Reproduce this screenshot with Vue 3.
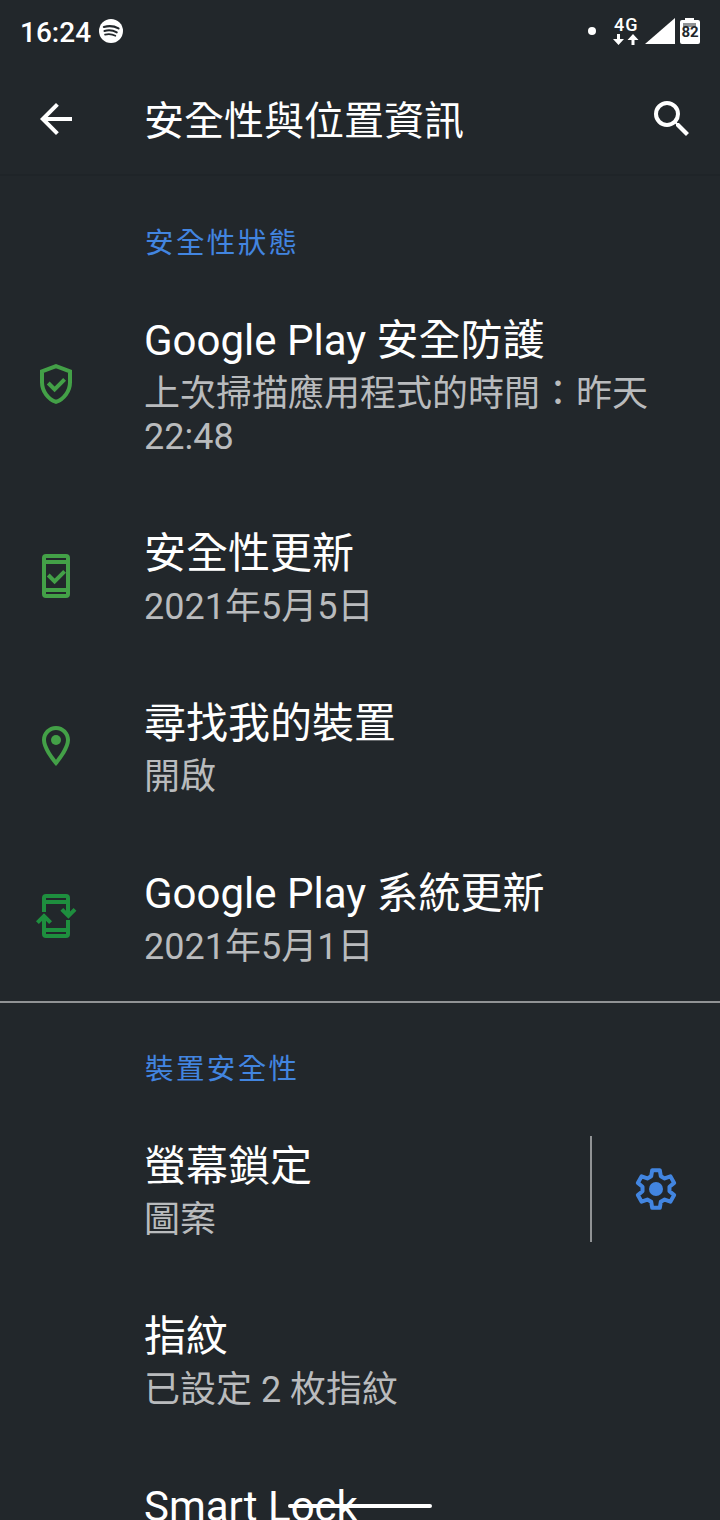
<script setup>
const status = [
  { icon: 'shield', title: 'Google Play 安全防護', summary: '上次掃描應用程式的時間：昨天 22:48' },
  { icon: 'update', title: '安全性更新', summary: '2021年5月5日' },
  { icon: 'pin', title: '尋找我的裝置', summary: '開啟' },
  { icon: 'system', title: 'Google Play 系統更新', summary: '2021年5月1日' },
]
const device = [
  { title: '螢幕鎖定', summary: '圖案', settings: true },
  { title: '指紋', summary: '已設定 2 枚指紋' },
  { title: 'Smart Lock', summary: '' },
]
</script>

<template>
  <div class="screen">
    <header class="status-bar">
      <span class="clock">16:24</span>
      <svg class="spotify" viewBox="0 0 24 24">
        <circle cx="12" cy="12" r="12" fill="#fff" />
        <g fill="none" stroke="#22272b" stroke-linecap="round">
          <path d="M4.900 8c5-1.400 10.400-.9 14.600 1.400" stroke-width="2.200" />
          <path d="M5.400 12c4.300-1.200 8.700-.7 12.400 1.400" stroke-width="1.900" />
          <path d="M6 15.600c3.700-.9 7.300-.5 10.400 1.200" stroke-width="1.600" />
        </g>
      </svg>
      <span class="spacer"></span>
      <span class="dot"></span>
      <div class="network">
        <span class="gen">4G</span>
        <svg class="arrows" viewBox="0 0 26 11" fill="#fff">
          <path d="M4 0h3v5h4L5.500 11 0 5h4zM18.500 11h3V6h4L20 0l-5.500 6h4z" />
        </svg>
      </div>
      <svg class="signal" viewBox="0 0 30 26"><path d="M30 0v26H0z" fill="#fff" /></svg>
      <div class="battery">
        <svg viewBox="0 0 20 26">
          <path d="M5 0h9v2h4a2 2 0 0 1 2 2v20a2 2 0 0 1-2 2H2a2 2 0 0 1-2-2V4a2 2 0 0 1 2-2h3z" fill="#fff" />
          <path d="M3 5h13v4H3z" fill="#909395" />
        </svg>
        <span class="level">82</span>
      </div>
    </header>

    <div class="app-bar">
      <svg class="back" viewBox="0 0 24 24"><path d="M20 11H7.830l5.590-5.590L12 4l-8 8 8 8 1.410-1.410L7.830 13H20z" fill="#fff" /></svg>
      <h1>安全性與位置資訊</h1>
      <svg class="search" viewBox="0 0 24 24"><path d="M15.500 14h-.79l-.28-.27A6.470 6.470 0 0 0 16 9.500 6.500 6.500 0 1 0 9.500 16c1.610 0 3.090-.59 4.230-1.570l.27.28v.79l5 4.990L20.490 19zM9.500 14a4.500 4.500 0 1 1 0-9 4.500 4.500 0 0 1 0 9z" fill="#fff" /></svg>
    </div>

    <section class="group first">
      <h2>安全性狀態</h2>
      <div v-for="item in status" :key="item.title" class="row">
        <div class="icon" :class="item.icon">
          <svg v-if="item.icon === 'shield'" viewBox="0 0 24 24" fill="none" stroke="#43a047" stroke-width="2">
            <path d="M12 3.100 5 5.750v5.340c0 4.400 3 8.500 7 9.850 4-1.350 7-5.450 7-9.850V5.750z" />
            <path d="m8.100 11.500 3.200 3.200 5-5" />
          </svg>
          <svg v-else-if="item.icon === 'update'" viewBox="0 0 24 24" fill="none" stroke="#43a047" stroke-width="2">
            <rect x="6" y="2" width="12" height="20" rx="1" />
            <path d="M6 5h12M6 19h12M8.100 11.500l3.200 3.200 5-5" />
          </svg>
          <svg v-else-if="item.icon === 'pin'" viewBox="0 0 24 24" fill="#43a047">
            <path d="M12 2C8.130 2 5 5.130 5 9c0 5.250 7 13 7 13s7-7.750 7-13c0-3.870-3.130-7-7-7zM7 9c0-2.760 2.240-5 5-5s5 2.240 5 5c0 2.880-2.880 7.190-5 9.880C9.920 16.210 7 11.850 7 9z" />
            <circle cx="12" cy="9" r="2.500" />
          </svg>
          <svg v-else viewBox="0 0 24 24" fill="none" stroke="#1e8e3e" stroke-width="2">
            <path d="M6 10V3a1 1 0 0 1 1-1h10a1 1 0 0 1 1 1v9M6 5h12M18 14v7a1 1 0 0 1-1 1H7a1 1 0 0 1-1-1v-9M6 19h12" />
            <path d="m14.900 8.700 3.300 3.300 3.300-3.300M2.700 15.300 6 12l3.300 3.300" />
          </svg>
        </div>
        <div class="text">
          <div class="title">{{ item.title }}</div>
          <div class="summary">{{ item.summary }}</div>
        </div>
      </div>
    </section>

    <section class="group second">
      <h2>裝置安全性</h2>
      <div v-for="item in device" :key="item.title" class="row">
        <div class="icon"></div>
        <div class="text">
          <div class="title">{{ item.title }}</div>
          <div class="summary">{{ item.summary }}</div>
        </div>
        <div v-if="item.settings" class="action">
          <svg viewBox="0 0 24 24">
            <path d="M9.600 5.600 10.100 2.600H13.900L14.400 5.600 16.340 6.720 19.190 5.650 21.090 8.950 18.740 10.880V13.120L21.090 15.050 19.190 18.350 16.340 17.280 14.400 18.400 13.900 21.400H10.100L9.600 18.400 7.660 17.280 4.810 18.350 2.910 15.050 5.260 13.120V10.880L2.910 8.950 4.810 5.650 7.660 6.720z" fill="none" stroke="#4285e0" stroke-width="2" stroke-linejoin="round" />
            <circle cx="12" cy="12" r="3.500" fill="#4285e0" />
          </svg>
        </div>
      </div>
    </section>
    <div class="home-handle"></div>
  </div>
</template>

<style>
body { background: #22272b; }
</style>

<style scoped>
.screen {
  position: relative;
  box-sizing: border-box;
  width: 720px;
  height: 1520px;
  overflow: hidden;
  background: #22272b;
  color: #fff;
  font-family: Roboto, "Noto Sans CJK TC", sans-serif;
}
.status-bar {
  display: flex;
  align-items: center;
  box-sizing: border-box;
  height: 62px;
  padding: 0 20px;
}
.clock { font-size: 28px; font-weight: 500; line-height: 32px; margin-top: 4px; }
.spotify { width: 24px; height: 24px; margin-left: 8px; }
.spacer { flex: 1; }
.dot { width: 8px; height: 8px; border-radius: 50%; background: #fff; }
.network { display: flex; flex-direction: column; width: 26px; margin-left: 17px; }
.gen { font-size: 18px; font-weight: 500; line-height: 14px; letter-spacing: 1px; padding-left: 1px; margin-bottom: 2px; }
.arrows { width: 26px; height: 11px; }
.signal { width: 30px; height: 26px; margin-left: 6px; }
.battery { position: relative; width: 20px; height: 26px; margin-left: 5px; }
.battery svg { display: block; width: 20px; height: 26px; }
.level {
  position: absolute;
  inset: 6px 0 0;
  color: #22272b;
  font-size: 15px;
  font-weight: 700;
  line-height: 16px;
  text-align: center;
}
.app-bar {
  display: flex;
  align-items: center;
  box-sizing: border-box;
  height: 114px;
  padding: 2px 24px 0 32px;
  border-bottom: 2px solid #1f2428;
}
.back, .search { width: 48px; height: 48px; }
.app-bar h1 { flex: 1; margin: 6px 0 0 64px; font-size: 40px; font-weight: 400; line-height: 56px; }
.group.first { height: 827px; padding-top: 46px; border-bottom: 2px solid #919395; box-sizing: border-box; }
.group h2 {
  margin: 0;
  padding-left: 145px;
  color: #4285e0;
  font-size: 28.500px;
  font-weight: 400;
  letter-spacing: 2.400px;
  line-height: 44px;
}
.group.second { padding-top: 45px; }
.row { display: flex; align-items: center; box-sizing: border-box; min-height: 170px; padding: 32px 0; }
.group.first .row:first-of-type { margin-top: 11px; padding-bottom: 31px; }
.group.first .row:first-of-type .summary { line-height: 43px; }
.group.second .row:first-of-type { margin-top: 11px; }
.icon { width: 48px; height: 48px; margin: 2px 64px 0 32px; flex: none; }
.icon.shield { margin-top: 0; }
.icon svg, .action svg { display: block; width: 48px; height: 48px; }
.text { flex: 1; }
.title { font-size: 42px; line-height: 64px; white-space: nowrap; }
.summary { min-height: 42px; padding-right: 56px; color: #b9bbbd; font-size: 36px; line-height: 42px; }
.action {
  display: flex;
  align-items: center;
  justify-content: center;
  box-sizing: border-box;
  width: 130px;
  height: 106px;
  margin: 1px 0 -1px;
  border-left: 2px solid #919395;
}
.home-handle {
  position: absolute;
  left: 288px;
  bottom: 12px;
  width: 144px;
  height: 4px;
  border-radius: 2px;
  background: #fff;
}
</style>
